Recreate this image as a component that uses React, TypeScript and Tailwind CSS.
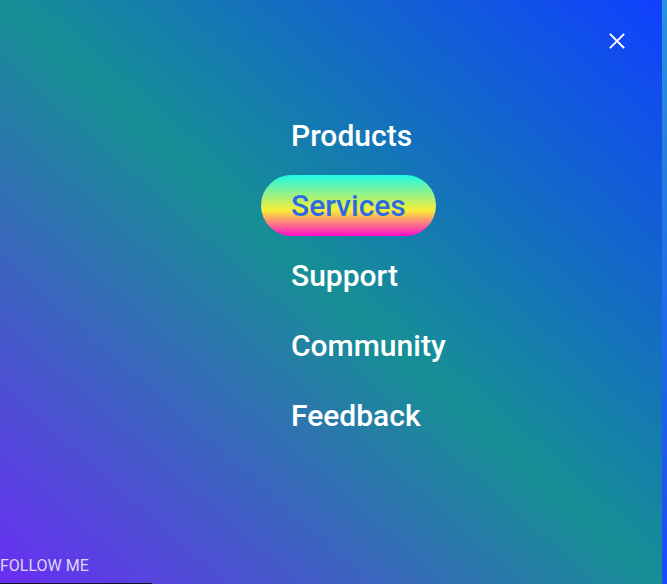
import { useState } from "react";

const items = ["Products", "Services", "Support", "Community", "Feedback"];

export default function App() {
  const [active, setActive] = useState("Services");

  return (
    <div className="flex h-[584px] w-full overflow-hidden font-['Roboto',sans-serif]">
      {/* Menu panel */}
      <div className="flex w-[662px] shrink-0 flex-col bg-[linear-gradient(to_top_right,#6a2ef4,#168f95,#1040ff)]">
        <div className="flex justify-end pt-[33px] pr-[37px]">
          <button className="text-white" aria-label="Close menu">
            <svg
              width="16"
              height="16"
              viewBox="0 0 16 16"
              fill="none"
              stroke="currentColor"
              strokeWidth="1.8"
              strokeLinecap="square"
            >
              <path d="M1.5 1.5l13 13M14.5 1.5l-13 13" />
            </svg>
          </button>
        </div>

        <nav className="mt-[56px] flex flex-col items-start gap-[9px] pl-[261px]">
          {items.map((item) => (
            <a
              key={item}
              href="#"
              onClick={(e) => {
                e.preventDefault();
                setActive(item);
              }}
              className={
                item === active
                  ? "flex h-[61px] items-center rounded-full bg-[linear-gradient(to_bottom,#1ff8e6,#f8ee38_58%,#ff0ccc)] px-[30px] text-[30px] font-medium text-[#2c6be3]"
                  : "flex h-[61px] items-center rounded-full px-[30px] text-[30px] font-medium text-white"
              }
            >
              {item}
            </a>
          ))}
        </nav>

        <div className="mt-auto flex flex-col">
          <p className="text-[16px] leading-[24px] text-[#ddd6f7]">
            FOLLOW ME
          </p>
          <div className="mt-[5px] h-px w-[152px] bg-[#14102a]" />
        </div>
      </div>

      {/* Edge strip */}
      <div className="w-[5px] bg-[linear-gradient(to_bottom,#2a92dc,#1e6fe8,#1a4cf6)]" />
    </div>
  );
}
